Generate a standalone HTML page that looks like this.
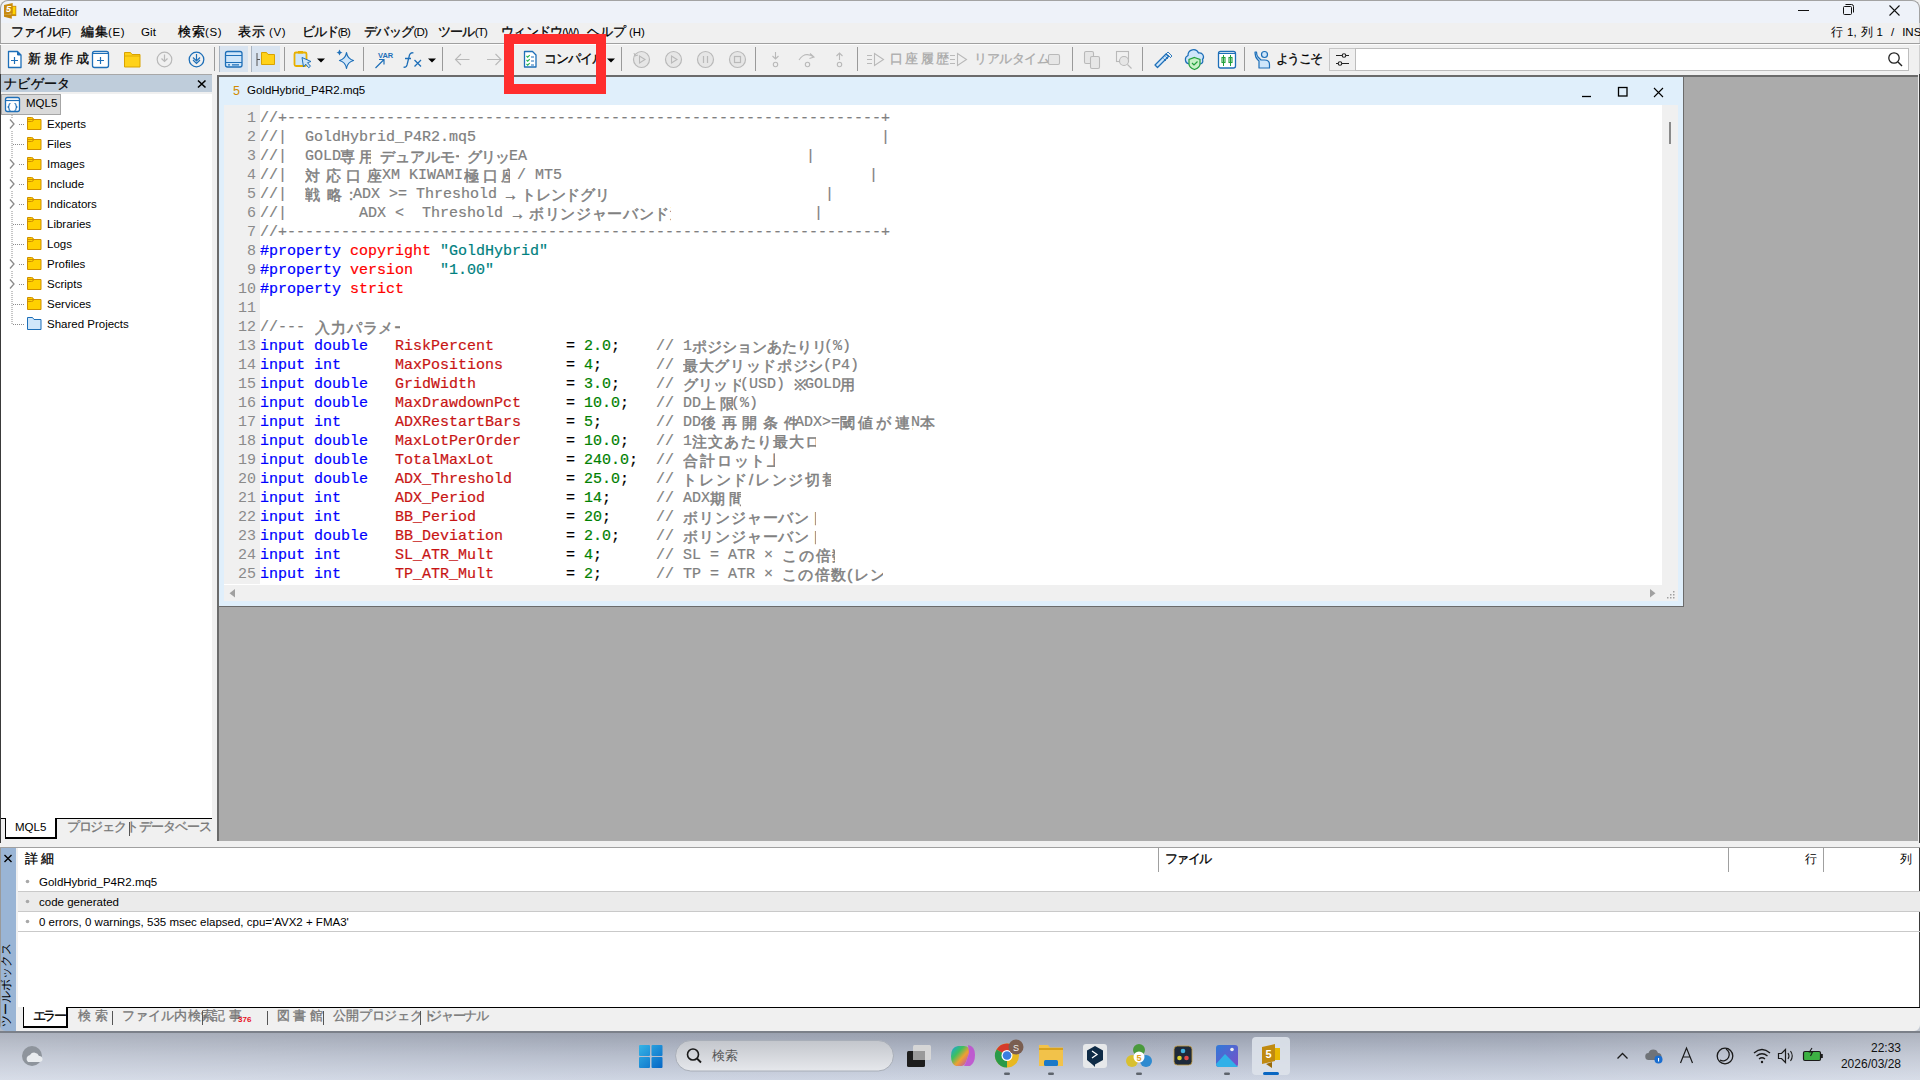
<!DOCTYPE html><html><head><meta charset="utf-8"><title>MetaEditor</title><style>
*{box-sizing:border-box;margin:0;padding:0}
html,body{width:1920px;height:1080px;overflow:hidden;background:#f0f0f0;font-family:"Liberation Sans",sans-serif;font-size:12px;color:#000;position:relative}
.abs{position:absolute}
.t{position:absolute;white-space:nowrap;line-height:1;font-size:11.5px;letter-spacing:0px;margin-top:-1px}
.cd{position:absolute;font-family:"Liberation Mono",monospace;font-size:15px;letter-spacing:0px;-webkit-text-stroke:0.2px currentColor;white-space:pre;line-height:19px;height:19px}
.jp{position:absolute;font-family:"Liberation Sans",sans-serif;font-size:15px;-webkit-text-stroke:0.5px currentColor;white-space:nowrap;overflow:hidden;line-height:19px;height:19px;letter-spacing:-1.5px}
.ln{position:absolute;left:200px;width:56px;text-align:right;font-family:"Liberation Mono",monospace;font-size:15px;letter-spacing:0px;color:#8a8a8a;line-height:19px;height:19px}
.kw{color:#0000ff}.id{color:#c81414}.cm{color:#808080}.nm{color:#008000}.st{color:#008080}.pp{color:#0000ff}.pr{color:#ff0000}.op{color:#000}
.jc{font-size:13px;line-height:0;-webkit-text-stroke:0.3px currentColor}
svg.ov{position:absolute;left:0;top:0;width:1920px;height:1080px;overflow:visible}
</style></head><body>
<div class="abs" style="left:0;top:0;width:1920px;height:40px;background:#eef2f9;border:1px solid #a3a3a3;border-bottom:none;border-radius:8px 8px 0 0"></div>
<div class="abs" style="left:0;top:23px;width:1px;height:51px;background:#a3a3a3"></div>
<div class="abs" style="left:1919px;top:23px;width:1px;height:51px;background:#d0d0d0"></div>
<div class="t" style="left:23px;top:8px">MetaEditor</div>
<div class="abs" style="left:1px;top:23px;width:1918px;height:20px;background:#f0f0f0"></div>
<div class="abs" style="left:0;top:43px;width:1920px;height:1px;background:#a0a0a0"></div>
<div class="abs" style="left:0;top:44px;width:1920px;height:1px;background:#fcfcfc"></div>
<div class="t" id="j0" style="left:11px;top:28px;letter-spacing:-1.11px;"><span class="jc">ファイル</span>(F)</div>
<div class="t" id="j1" style="left:81px;top:28px;letter-spacing:0.54px;"><span class="jc">編集</span>(E)</div>
<div class="t" id="j2" style="left:141px;top:28px;letter-spacing:0.15px;">Git</div>
<div class="t" id="j3" style="left:178px;top:28px;letter-spacing:0.54px;"><span class="jc">検索</span>(S)</div>
<div class="t" id="j4" style="left:238px;top:28px;letter-spacing:0.59px;"><span class="jc">表示</span> (V)</div>
<div class="t" id="j5" style="left:302px;top:28px;letter-spacing:-1.12px;"><span class="jc">ビルド</span>(B)</div>
<div class="t" id="j6" style="left:364px;top:28px;letter-spacing:-0.66px;"><span class="jc">デバッグ</span>(D)</div>
<div class="t" id="j7" style="left:438px;top:28px;letter-spacing:-0.79px;"><span class="jc">ツール</span>(T)</div>
<div class="t" id="j8" style="left:501px;top:28px;letter-spacing:-0.75px;"><span class="jc">ウィンドウ</span>(W)</div>
<div class="t" id="j9" style="left:587px;top:28px;letter-spacing:-0.07px;"><span class="jc">ヘルプ</span> (H)</div>
<div class="t" style="left:1831px;top:28px;word-spacing:0.8px">行 1, 列 1 &nbsp;/ &nbsp;INS</div>
<div class="abs" style="left:1px;top:45px;width:1918px;height:30px;background:#f0f0f0"></div>
<div class="t" id="j10" style="left:28px;top:55px;letter-spacing:3.00px;"><span class="jc">新規作成</span></div>
<div class="t" id="j11" style="left:544px;top:55px;letter-spacing:-0.94px;"><span class="jc">コンパイル</span></div>
<div class="t" id="j12" style="left:890px;top:55px;letter-spacing:2.33px;color:#aaa"><span class="jc">口座履歴</span></div>
<div class="t" id="j13" style="left:974px;top:55px;letter-spacing:-0.50px;color:#aaa"><span class="jc">リアルタイム</span></div>
<div class="t" id="j14" style="left:1276px;top:55px;letter-spacing:-1.67px;"><span class="jc">ようこそ</span></div>
<div class="abs" style="left:0;top:74px;width:212px;height:1px;background:#a8a8a8"></div>
<div class="abs" style="left:0;top:75px;width:212px;height:17px;background:#bfcddb"></div>
<div class="t" id="j15" style="left:4px;top:79px;letter-spacing:0.31px;font-size:12.5px"><span class="jc">ナビゲータ</span></div>
<div class="abs" style="left:1px;top:94px;width:211px;height:724px;background:#fff"></div>
<div class="abs" style="left:1px;top:94px;width:60px;height:21px;background:#d9d9d9;border:1px solid #a6a6a6"></div>
<div class="t" style="left:26px;top:99px">MQL5</div>
<div class="t" style="left:47px;top:120px">Experts</div>
<div class="t" style="left:47px;top:140px">Files</div>
<div class="t" style="left:47px;top:160px">Images</div>
<div class="t" style="left:47px;top:180px">Include</div>
<div class="t" style="left:47px;top:200px">Indicators</div>
<div class="t" style="left:47px;top:220px">Libraries</div>
<div class="t" style="left:47px;top:240px">Logs</div>
<div class="t" style="left:47px;top:260px">Profiles</div>
<div class="t" style="left:47px;top:280px">Scripts</div>
<div class="t" style="left:47px;top:300px">Services</div>
<div class="t" style="left:47px;top:320px">Shared Projects</div>
<div class="abs" style="left:217px;top:75px;width:1701px;height:766px;background:#ababab"></div>
<div class="abs" style="left:217px;top:75px;width:1701px;height:2px;background:#6b6b6b"></div>
<div class="abs" style="left:217px;top:75px;width:2px;height:766px;background:#6b6b6b"></div>
<div class="abs" style="left:219px;top:77px;width:1464px;height:529px;background:#e0effb"></div>
<div class="abs" style="left:219px;top:606px;width:1465px;height:1px;background:#6b6b6b"></div>
<div class="abs" style="left:1683px;top:77px;width:1px;height:530px;background:#6b6b6b"></div>
<div class="abs" style="left:224px;top:105px;width:1438px;height:480px;background:#fff"></div>
<div class="abs" style="left:224px;top:105px;width:36px;height:479px;background:#f0f0f0"></div>
<div class="abs" style="left:1662px;top:105px;width:16px;height:480px;background:#f0f0f0"></div>
<div class="abs" style="left:224px;top:585px;width:1454px;height:16px;background:#f0f0f0"></div>
<div class="t" style="left:233px;top:86px;font-size:12.5px;color:#d08a00">5</div>
<div class="t" style="left:247px;top:86px">GoldHybrid_P4R2.mq5</div>
<div class="ln" style="top:108.5px">1</div>
<span class="cd cm" style="left:260px;top:108.5px">//+------------------------------------------------------------------+</span>
<div class="ln" style="top:127.5px">2</div>
<span class="cd cm" style="left:260px;top:127.5px">//|  GoldHybrid_P4R2.mq5</span>
<span class="cd cm" style="left:881px;top:127.5px">|</span>
<div class="ln" style="top:146.5px">3</div>
<span class="cd cm" style="left:260px;top:146.5px">//|  GOLD</span>
<span class="jp cm" style="left:340px;top:146.5px;width:31px;letter-spacing:3.50px">専用</span>
<span class="jp cm" style="left:380px;top:146.5px;width:79px;letter-spacing:0.00px">デュアルモード</span>
<span class="jp cm" style="left:467px;top:146.5px;width:42px;letter-spacing:-1.00px">グリッド</span>
<span class="cd cm" style="left:509px;top:146.5px">EA</span>
<span class="cd cm" style="left:806px;top:146.5px">|</span>
<div class="ln" style="top:165.5px">4</div>
<span class="cd cm" style="left:260px;top:165.5px">//|  </span>
<span class="jp cm" style="left:305px;top:165.5px;width:79px;letter-spacing:5.60px">対応口座:</span>
<span class="cd cm" style="left:382px;top:165.5px">XM KIWAMI</span>
<span class="jp cm" style="left:464px;top:165.5px;width:46px;letter-spacing:3.67px">極口座</span>
<span class="cd cm" style="left:508px;top:165.5px"> / MT5</span>
<span class="cd cm" style="left:869px;top:165.5px">|</span>
<div class="ln" style="top:184.5px">5</div>
<span class="cd cm" style="left:260px;top:184.5px">//|  </span>
<span class="jp cm" style="left:305px;top:184.5px;width:50px;letter-spacing:7.00px">戦略:</span>
<span class="cd cm" style="left:353px;top:184.5px">ADX &gt;= Threshold</span>
<span class="jp cm" style="left:503px;top:184.5px;width:14px;letter-spacing:1.00px">→</span>
<span class="jp cm" style="left:521px;top:184.5px;width:88px;letter-spacing:-0.25px">トレンドグリッド</span>
<span class="cd cm" style="left:825px;top:184.5px">|</span>
<div class="ln" style="top:203.5px">6</div>
<span class="cd cm" style="left:260px;top:203.5px">//|        ADX &lt;  Threshold</span>
<span class="jp cm" style="left:510px;top:203.5px;width:14px;letter-spacing:1.00px">→</span>
<span class="jp cm" style="left:529px;top:203.5px;width:142px;letter-spacing:0.67px">ボリンジャーバンド逆張り</span>
<span class="cd cm" style="left:814px;top:203.5px">|</span>
<div class="ln" style="top:222.5px">7</div>
<span class="cd cm" style="left:260px;top:222.5px">//+------------------------------------------------------------------+</span>
<div class="ln" style="top:241.5px">8</div>
<span class="cd pp" style="left:260px;top:241.5px">#property</span>
<span class="cd pr" style="left:350px;top:241.5px">copyright</span>
<span class="cd st" style="left:440px;top:241.5px">&quot;GoldHybrid&quot;</span>
<div class="ln" style="top:260.5px">9</div>
<span class="cd pp" style="left:260px;top:260.5px">#property</span>
<span class="cd pr" style="left:350px;top:260.5px">version</span>
<span class="cd st" style="left:440px;top:260.5px">&quot;1.00&quot;</span>
<div class="ln" style="top:279.5px">10</div>
<span class="cd pp" style="left:260px;top:279.5px">#property</span>
<span class="cd pr" style="left:350px;top:279.5px">strict</span>
<div class="ln" style="top:298.5px">11</div>
<div class="ln" style="top:317.5px">12</div>
<span class="cd cm" style="left:260px;top:317.5px">//---</span>
<span class="jp cm" style="left:315px;top:317.5px;width:85px;letter-spacing:0.86px">入力パラメータ</span>
<div class="ln" style="top:336.5px">13</div>
<span class="cd kw" style="left:260px;top:336.5px">input</span>
<span class="cd kw" style="left:314px;top:336.5px">double</span>
<span class="cd id" style="left:395px;top:336.5px">RiskPercent</span>
<span class="cd op" style="left:566px;top:336.5px">=</span>
<span class="cd nm" style="left:584px;top:336.5px">2.0</span>
<span class="cd op" style="left:611px;top:336.5px">;</span>
<span class="cd cm" style="left:656px;top:336.5px">//</span>
<span class="cd cm" style="left:683px;top:336.5px">1</span>
<span class="jp cm" style="left:692px;top:336.5px;width:134px;letter-spacing:0.00px">ポジションあたりリスク率</span>
<span class="cd cm" style="left:824px;top:336.5px">(%)</span>
<div class="ln" style="top:355.5px">14</div>
<span class="cd kw" style="left:260px;top:355.5px">input</span>
<span class="cd kw" style="left:314px;top:355.5px">int</span>
<span class="cd id" style="left:395px;top:355.5px">MaxPositions</span>
<span class="cd op" style="left:566px;top:355.5px">=</span>
<span class="cd nm" style="left:584px;top:355.5px">4</span>
<span class="cd op" style="left:593px;top:355.5px">;</span>
<span class="cd cm" style="left:656px;top:355.5px">//</span>
<span class="jp cm" style="left:683px;top:355.5px;width:142px;letter-spacing:0.67px">最大グリッドポジション数</span>
<span class="cd cm" style="left:823px;top:355.5px">(P4)</span>
<div class="ln" style="top:374.5px">15</div>
<span class="cd kw" style="left:260px;top:374.5px">input</span>
<span class="cd kw" style="left:314px;top:374.5px">double</span>
<span class="cd id" style="left:395px;top:374.5px">GridWidth</span>
<span class="cd op" style="left:566px;top:374.5px">=</span>
<span class="cd nm" style="left:584px;top:374.5px">3.0</span>
<span class="cd op" style="left:611px;top:374.5px">;</span>
<span class="cd cm" style="left:656px;top:374.5px">//</span>
<span class="jp cm" style="left:683px;top:374.5px;width:58px;letter-spacing:0.20px">グリッド幅</span>
<span class="cd cm" style="left:740px;top:374.5px">(USD)</span>
<span class="jp cm" style="left:794px;top:374.5px;width:13px;letter-spacing:0.00px">※</span>
<span class="cd cm" style="left:805px;top:374.5px">GOLD</span>
<span class="jp cm" style="left:840px;top:374.5px;width:17px;letter-spacing:4.00px">用</span>
<div class="ln" style="top:393.5px">16</div>
<span class="cd kw" style="left:260px;top:393.5px">input</span>
<span class="cd kw" style="left:314px;top:393.5px">double</span>
<span class="cd id" style="left:395px;top:393.5px">MaxDrawdownPct</span>
<span class="cd op" style="left:566px;top:393.5px">=</span>
<span class="cd nm" style="left:584px;top:393.5px">10.0</span>
<span class="cd op" style="left:620px;top:393.5px">;</span>
<span class="cd cm" style="left:656px;top:393.5px">//</span>
<span class="cd cm" style="left:683px;top:393.5px">DD</span>
<span class="jp cm" style="left:701px;top:393.5px;width:32px;letter-spacing:4.00px">上限</span>
<span class="cd cm" style="left:731px;top:393.5px">(%)</span>
<div class="ln" style="top:412.5px">17</div>
<span class="cd kw" style="left:260px;top:412.5px">input</span>
<span class="cd kw" style="left:314px;top:412.5px">int</span>
<span class="cd id" style="left:395px;top:412.5px">ADXRestartBars</span>
<span class="cd op" style="left:566px;top:412.5px">=</span>
<span class="cd nm" style="left:584px;top:412.5px">5</span>
<span class="cd op" style="left:593px;top:412.5px">;</span>
<span class="cd cm" style="left:656px;top:412.5px">//</span>
<span class="cd cm" style="left:683px;top:412.5px">DD</span>
<span class="jp cm" style="left:701px;top:412.5px;width:96px;letter-spacing:5.67px">後再開条件:</span>
<span class="cd cm" style="left:795px;top:412.5px">ADX&gt;=</span>
<span class="jp cm" style="left:840px;top:412.5px;width:73px;letter-spacing:3.20px">閾値が連続</span>
<span class="cd cm" style="left:911px;top:412.5px">N</span>
<span class="jp cm" style="left:920px;top:412.5px;width:17px;letter-spacing:4.00px">本</span>
<div class="ln" style="top:431.5px">18</div>
<span class="cd kw" style="left:260px;top:431.5px">input</span>
<span class="cd kw" style="left:314px;top:431.5px">double</span>
<span class="cd id" style="left:395px;top:431.5px">MaxLotPerOrder</span>
<span class="cd op" style="left:566px;top:431.5px">=</span>
<span class="cd nm" style="left:584px;top:431.5px">10.0</span>
<span class="cd op" style="left:620px;top:431.5px">;</span>
<span class="cd cm" style="left:656px;top:431.5px">//</span>
<span class="cd cm" style="left:683px;top:431.5px">1</span>
<span class="jp cm" style="left:692px;top:431.5px;width:124px;letter-spacing:1.20px">注文あたり最大ロット</span>
<div class="ln" style="top:450.5px">19</div>
<span class="cd kw" style="left:260px;top:450.5px">input</span>
<span class="cd kw" style="left:314px;top:450.5px">double</span>
<span class="cd id" style="left:395px;top:450.5px">TotalMaxLot</span>
<span class="cd op" style="left:566px;top:450.5px">=</span>
<span class="cd nm" style="left:584px;top:450.5px">240.0</span>
<span class="cd op" style="left:629px;top:450.5px">;</span>
<span class="cd cm" style="left:656px;top:450.5px">//</span>
<span class="jp cm" style="left:683px;top:450.5px;width:92px;letter-spacing:1.86px">合計ロット上限</span>
<div class="ln" style="top:469.5px">20</div>
<span class="cd kw" style="left:260px;top:469.5px">input</span>
<span class="cd kw" style="left:314px;top:469.5px">double</span>
<span class="cd id" style="left:395px;top:469.5px">ADX_Threshold</span>
<span class="cd op" style="left:566px;top:469.5px">=</span>
<span class="cd nm" style="left:584px;top:469.5px">25.0</span>
<span class="cd op" style="left:620px;top:469.5px">;</span>
<span class="cd cm" style="left:656px;top:469.5px">//</span>
<span class="jp cm" style="left:682px;top:469.5px;width:149px;letter-spacing:1.75px">トレンド/レンジ切替閾値</span>
<div class="ln" style="top:488.5px">21</div>
<span class="cd kw" style="left:260px;top:488.5px">input</span>
<span class="cd kw" style="left:314px;top:488.5px">int</span>
<span class="cd id" style="left:395px;top:488.5px">ADX_Period</span>
<span class="cd op" style="left:566px;top:488.5px">=</span>
<span class="cd nm" style="left:584px;top:488.5px">14</span>
<span class="cd op" style="left:602px;top:488.5px">;</span>
<span class="cd cm" style="left:656px;top:488.5px">//</span>
<span class="cd cm" style="left:683px;top:488.5px">ADX</span>
<span class="jp cm" style="left:710px;top:488.5px;width:31px;letter-spacing:3.50px">期間</span>
<div class="ln" style="top:507.5px">22</div>
<span class="cd kw" style="left:260px;top:507.5px">input</span>
<span class="cd kw" style="left:314px;top:507.5px">int</span>
<span class="cd id" style="left:395px;top:507.5px">BB_Period</span>
<span class="cd op" style="left:566px;top:507.5px">=</span>
<span class="cd nm" style="left:584px;top:507.5px">20</span>
<span class="cd op" style="left:602px;top:507.5px">;</span>
<span class="cd cm" style="left:656px;top:507.5px">//</span>
<span class="jp cm" style="left:683px;top:507.5px;width:133px;letter-spacing:0.91px">ボリンジャーバンド期間</span>
<div class="ln" style="top:526.5px">23</div>
<span class="cd kw" style="left:260px;top:526.5px">input</span>
<span class="cd kw" style="left:314px;top:526.5px">double</span>
<span class="cd id" style="left:395px;top:526.5px">BB_Deviation</span>
<span class="cd op" style="left:566px;top:526.5px">=</span>
<span class="cd nm" style="left:584px;top:526.5px">2.0</span>
<span class="cd op" style="left:611px;top:526.5px">;</span>
<span class="cd cm" style="left:656px;top:526.5px">//</span>
<span class="jp cm" style="left:683px;top:526.5px;width:133px;letter-spacing:0.91px">ボリンジャーバンド偏差</span>
<div class="ln" style="top:545.5px">24</div>
<span class="cd kw" style="left:260px;top:545.5px">input</span>
<span class="cd kw" style="left:314px;top:545.5px">int</span>
<span class="cd id" style="left:395px;top:545.5px">SL_ATR_Mult</span>
<span class="cd op" style="left:566px;top:545.5px">=</span>
<span class="cd nm" style="left:584px;top:545.5px">4</span>
<span class="cd op" style="left:593px;top:545.5px">;</span>
<span class="cd cm" style="left:656px;top:545.5px">//</span>
<span class="cd cm" style="left:683px;top:545.5px">SL = ATR ×</span>
<span class="jp cm" style="left:782px;top:545.5px;width:53px;letter-spacing:1.75px">この倍数</span>
<div class="ln" style="top:564.5px">25</div>
<span class="cd kw" style="left:260px;top:564.5px">input</span>
<span class="cd kw" style="left:314px;top:564.5px">int</span>
<span class="cd id" style="left:395px;top:564.5px">TP_ATR_Mult</span>
<span class="cd op" style="left:566px;top:564.5px">=</span>
<span class="cd nm" style="left:584px;top:564.5px">2</span>
<span class="cd op" style="left:593px;top:564.5px">;</span>
<span class="cd cm" style="left:656px;top:564.5px">//</span>
<span class="cd cm" style="left:683px;top:564.5px">TP = ATR ×</span>
<span class="jp cm" style="left:782px;top:564.5px;width:101px;letter-spacing:1.33px">この倍数(レンジ)</span>
<div class="abs" style="left:0;top:74px;width:1px;height:773px;background:#3a3a3a"></div>
<div class="abs" style="left:0;top:847px;width:1px;height:184px;background:#9a9a9a"></div>
<div class="abs" style="left:1919px;top:74px;width:1px;height:957px;background:#3a3a3a"></div>
<div class="abs" style="left:0;top:843px;width:1920px;height:4px;background:#f0f0f0"></div>
<div class="abs" style="left:0;top:847px;width:1920px;height:1px;background:#a0a0a0"></div>
<div class="abs" style="left:1px;top:848px;width:15px;height:183px;background:#9ab5d5"></div>
<div class="abs" style="left:18px;top:848px;width:1901px;height:159px;background:#fff"></div>
<div class="abs" style="left:18px;top:891px;width:1902px;height:1px;background:#c9c9c9"></div>
<div class="abs" style="left:18px;top:892px;width:1902px;height:19px;background:#ebebeb"></div>
<div class="abs" style="left:18px;top:911px;width:1902px;height:1px;background:#c9c9c9"></div>
<div class="abs" style="left:18px;top:931px;width:1902px;height:1px;background:#c9c9c9"></div>
<div class="abs" style="left:1158px;top:848px;width:1px;height:24px;background:#a0a0a0"></div>
<div class="abs" style="left:1728px;top:848px;width:1px;height:24px;background:#a0a0a0"></div>
<div class="abs" style="left:1823px;top:848px;width:1px;height:24px;background:#a0a0a0"></div>
<div class="t" id="j16" style="left:25px;top:855px;letter-spacing:2.50px;"><span class="jc">詳細</span></div>
<div class="t" id="j17" style="left:1165px;top:855px;letter-spacing:-1.67px;"><span class="jc">ファイル</span></div>
<div class="t" style="left:1805px;top:855px">行</div>
<div class="t" style="left:1900px;top:855px">列</div>
<div class="t" style="left:39px;top:878px">GoldHybrid_P4R2.mq5</div>
<div class="t" style="left:39px;top:898px">code generated</div>
<div class="t" style="left:39px;top:918px">0 errors, 0 warnings, 535 msec elapsed, cpu='AVX2 + FMA3'</div>
<div class="t" style="left:1px;top:1028px;transform-origin:0 0;transform:rotate(-90deg);font-size:11.5px;width:70px">ツールボックス</div>
<div class="abs" style="left:18px;top:1007px;width:1902px;height:24px;background:#f0f0f0"></div>
<div class="abs" style="left:67px;top:1007px;width:1853px;height:1px;background:#000"></div>
<div class="abs" style="left:23px;top:1007px;width:45px;height:21px;background:#fff;border:1px solid #000;border-top:none;border-right-width:2px;border-bottom-width:2px"></div>
<div class="t" id="j18" style="left:33px;top:1012px;letter-spacing:-2.62px;"><span class="jc">エラー</span></div>
<div class="t" id="j19" style="left:78px;top:1012px;letter-spacing:3.50px;color:#777"><span class="jc">検索</span></div>
<div class="t" id="j20" style="left:122px;top:1012px;letter-spacing:0.12px;color:#777"><span class="jc">ファイル内検索</span></div>
<div class="t" id="j21" style="left:212px;top:1012px;letter-spacing:3.50px;color:#777"><span class="jc">記事</span></div>
<div class="t" id="j22" style="left:277px;top:1012px;letter-spacing:3.38px;color:#777"><span class="jc">図書館</span></div>
<div class="t" id="j23" style="left:333px;top:1012px;letter-spacing:-0.14px;color:#777"><span class="jc">公開プロジェクト</span></div>
<div class="t" id="j24" style="left:429px;top:1012px;letter-spacing:-1.19px;color:#777"><span class="jc">ジャーナル</span></div>
<div class="abs" style="left:112px;top:1011px;width:1px;height:14px;background:#555"></div>
<div class="abs" style="left:202px;top:1011px;width:1px;height:14px;background:#555"></div>
<div class="abs" style="left:267px;top:1011px;width:1px;height:14px;background:#555"></div>
<div class="abs" style="left:323px;top:1011px;width:1px;height:14px;background:#555"></div>
<div class="abs" style="left:420px;top:1011px;width:1px;height:14px;background:#555"></div>
<div class="t" style="left:238px;top:1017px;font-size:8px;font-weight:bold;letter-spacing:0;color:#e81123">376</div>
<div class="abs" style="left:56px;top:818px;width:156px;height:1px;background:#000"></div>
<div class="abs" style="left:1px;top:818px;width:5px;height:1px;background:#000"></div>
<div class="abs" style="left:5px;top:818px;width:52px;height:21px;background:#fff;border:1px solid #000;border-top:none;border-right-width:2px;border-bottom-width:2px"></div>
<div class="t" style="left:15px;top:823px">MQL5</div>
<div class="t" id="j25" style="left:67px;top:823px;letter-spacing:-1.30px;color:#777"><span class="jc">プロジェクト</span></div>
<div class="abs" style="left:129px;top:822px;width:1px;height:14px;background:#555"></div>
<div class="t" id="j26" style="left:139px;top:823px;letter-spacing:-1.10px;color:#777"><span class="jc">データベース</span></div>
<svg class="ov" viewBox="0 0 1920 1080">
<rect x="5.5" y="97.5" width="14" height="14" rx="2" fill="#fff" stroke="#1e6fb8" stroke-width="1.3"/>
<line x1="5.5" y1="100.5" x2="19.5" y2="100.5" stroke="#1e6fb8" stroke-width="1.2"/>
<path d="M10.5 103.5 q-1.5 0 -1.5 1.5 v1 l-1 1 l1 1 v1 q0 1.5 1.5 1.5 M14.5 103.5 q1.5 0 1.5 1.5 v1 l1 1 l-1 1 v1 q0 1.5 -1.5 1.5" fill="none" stroke="#1e6fb8" stroke-width="1.1"/>
<line x1="12" y1="115" x2="12" y2="324" stroke="#8c8c8c" stroke-width="1" stroke-dasharray="1,1"/>
<rect x="8" y="118" width="8" height="12" fill="#fff"/>
<polyline points="10,119.5 14,124 10,128.5" fill="none" stroke="#8a8a8a" stroke-width="1.3"/>
<line x1="19" y1="124.5" x2="24" y2="124.5" stroke="#8c8c8c" stroke-width="1" stroke-dasharray="1,1"/>
<path d="M27.5 117.5 h4 a2 2 0 0 1 0 4 h-4 z M27.5 119.5 h13.5 v10 h-13.5 z" fill="#ffd000" stroke="#d09000" stroke-width="1"/>
<line x1="13" y1="144.5" x2="24" y2="144.5" stroke="#8c8c8c" stroke-width="1" stroke-dasharray="1,1"/>
<path d="M27.5 137.5 h4 a2 2 0 0 1 0 4 h-4 z M27.5 139.5 h13.5 v10 h-13.5 z" fill="#ffd000" stroke="#d09000" stroke-width="1"/>
<rect x="8" y="158" width="8" height="12" fill="#fff"/>
<polyline points="10,159.5 14,164 10,168.5" fill="none" stroke="#8a8a8a" stroke-width="1.3"/>
<line x1="19" y1="164.5" x2="24" y2="164.5" stroke="#8c8c8c" stroke-width="1" stroke-dasharray="1,1"/>
<path d="M27.5 157.5 h4 a2 2 0 0 1 0 4 h-4 z M27.5 159.5 h13.5 v10 h-13.5 z" fill="#ffd000" stroke="#d09000" stroke-width="1"/>
<rect x="8" y="178" width="8" height="12" fill="#fff"/>
<polyline points="10,179.5 14,184 10,188.5" fill="none" stroke="#8a8a8a" stroke-width="1.3"/>
<line x1="19" y1="184.5" x2="24" y2="184.5" stroke="#8c8c8c" stroke-width="1" stroke-dasharray="1,1"/>
<path d="M27.5 177.5 h4 a2 2 0 0 1 0 4 h-4 z M27.5 179.5 h13.5 v10 h-13.5 z" fill="#ffd000" stroke="#d09000" stroke-width="1"/>
<rect x="8" y="198" width="8" height="12" fill="#fff"/>
<polyline points="10,199.5 14,204 10,208.5" fill="none" stroke="#8a8a8a" stroke-width="1.3"/>
<line x1="19" y1="204.5" x2="24" y2="204.5" stroke="#8c8c8c" stroke-width="1" stroke-dasharray="1,1"/>
<path d="M27.5 197.5 h4 a2 2 0 0 1 0 4 h-4 z M27.5 199.5 h13.5 v10 h-13.5 z" fill="#ffd000" stroke="#d09000" stroke-width="1"/>
<line x1="13" y1="224.5" x2="24" y2="224.5" stroke="#8c8c8c" stroke-width="1" stroke-dasharray="1,1"/>
<path d="M27.5 217.5 h4 a2 2 0 0 1 0 4 h-4 z M27.5 219.5 h13.5 v10 h-13.5 z" fill="#ffd000" stroke="#d09000" stroke-width="1"/>
<line x1="13" y1="244.5" x2="24" y2="244.5" stroke="#8c8c8c" stroke-width="1" stroke-dasharray="1,1"/>
<path d="M27.5 237.5 h4 a2 2 0 0 1 0 4 h-4 z M27.5 239.5 h13.5 v10 h-13.5 z" fill="#ffd000" stroke="#d09000" stroke-width="1"/>
<rect x="8" y="258" width="8" height="12" fill="#fff"/>
<polyline points="10,259.5 14,264 10,268.5" fill="none" stroke="#8a8a8a" stroke-width="1.3"/>
<line x1="19" y1="264.5" x2="24" y2="264.5" stroke="#8c8c8c" stroke-width="1" stroke-dasharray="1,1"/>
<path d="M27.5 257.5 h4 a2 2 0 0 1 0 4 h-4 z M27.5 259.5 h13.5 v10 h-13.5 z" fill="#ffd000" stroke="#d09000" stroke-width="1"/>
<rect x="8" y="278" width="8" height="12" fill="#fff"/>
<polyline points="10,279.5 14,284 10,288.5" fill="none" stroke="#8a8a8a" stroke-width="1.3"/>
<line x1="19" y1="284.5" x2="24" y2="284.5" stroke="#8c8c8c" stroke-width="1" stroke-dasharray="1,1"/>
<path d="M27.5 277.5 h4 a2 2 0 0 1 0 4 h-4 z M27.5 279.5 h13.5 v10 h-13.5 z" fill="#ffd000" stroke="#d09000" stroke-width="1"/>
<line x1="13" y1="304.5" x2="24" y2="304.5" stroke="#8c8c8c" stroke-width="1" stroke-dasharray="1,1"/>
<path d="M27.5 297.5 h4 a2 2 0 0 1 0 4 h-4 z M27.5 299.5 h13.5 v10 h-13.5 z" fill="#ffd000" stroke="#d09000" stroke-width="1"/>
<line x1="13" y1="324.5" x2="24" y2="324.5" stroke="#8c8c8c" stroke-width="1" stroke-dasharray="1,1"/>
<path d="M27.5 317.5 h5 l1.5 2 h7 v10 h-13.5 z" fill="#cfe6fa" stroke="#1e6fb8" stroke-width="1"/>
<line x1="214.5" y1="47" x2="214.5" y2="71" stroke="#9a9a9a" stroke-width="1"/>
<line x1="284.5" y1="47" x2="284.5" y2="71" stroke="#9a9a9a" stroke-width="1"/>
<line x1="363.5" y1="47" x2="363.5" y2="71" stroke="#9a9a9a" stroke-width="1"/>
<line x1="442.5" y1="47" x2="442.5" y2="71" stroke="#9a9a9a" stroke-width="1"/>
<line x1="621.5" y1="47" x2="621.5" y2="71" stroke="#9a9a9a" stroke-width="1"/>
<line x1="755.5" y1="47" x2="755.5" y2="71" stroke="#9a9a9a" stroke-width="1"/>
<line x1="857.5" y1="47" x2="857.5" y2="71" stroke="#9a9a9a" stroke-width="1"/>
<line x1="1072.5" y1="47" x2="1072.5" y2="71" stroke="#9a9a9a" stroke-width="1"/>
<line x1="1142.5" y1="47" x2="1142.5" y2="71" stroke="#9a9a9a" stroke-width="1"/>
<line x1="1244.5" y1="47" x2="1244.5" y2="71" stroke="#9a9a9a" stroke-width="1"/>
<rect x="219" y="46" width="29" height="26" fill="#d9e4f0"/><line x1="219.5" y1="46" x2="219.5" y2="72" stroke="#a9b4c0"/>
<rect x="251" y="46" width="29" height="26" fill="#d9e4f0"/><line x1="251.5" y1="46" x2="251.5" y2="72" stroke="#a9b4c0"/>
<path d="M8.5 51.5 h9 l3.5 3.5 v12.5 h-12.5 z" fill="#fff" stroke="#1e6fb8" stroke-width="1.3" stroke-linejoin="round"/>
<path d="M17.5 51.5 v3.5 h3.5" fill="#1e6fb8" stroke="#1e6fb8" stroke-width="1"/>
<path d="M11 60.5 h7 M14.5 57 v7" stroke="#1e6fb8" stroke-width="1.2"/>
<rect x="92.5" y="51.5" width="16" height="16" rx="2" fill="#fff" stroke="#1e6fb8" stroke-width="1.3"/>
<line x1="92.5" y1="53.5" x2="108.5" y2="53.5" stroke="#1e6fb8" stroke-width="1"/>
<path d="M97 60.5 h7 M100.5 57 v7" stroke="#1e6fb8" stroke-width="1.2"/>
<path d="M124.5 52.5 h6 l1.5 2 h8 v12.5 h-15.5 z" fill="#ffd21a" stroke="#d9a300" stroke-width="1"/>
<line x1="124.5" y1="56" x2="140" y2="56" stroke="#d9a300" stroke-width="0.8"/>
<circle cx="164.5" cy="59.5" r="7.3" fill="none" stroke="#b9b9b9" stroke-width="1.2"/><path d="M164.5 54.5 v7 M161.5 58.5 l3 3 l3 -3" fill="none" stroke="#b9b9b9" stroke-width="1.2"/>
<circle cx="196.5" cy="59.5" r="7.3" fill="none" stroke="#1e6fb8" stroke-width="1.3"/><path d="M196.5 54 v6 M193 57.5 l3.5 3.5 l3.5 -3.5 M193 60 l3.5 3.5 l3.5 -3.5" fill="none" stroke="#1e6fb8" stroke-width="1.2"/>
<rect x="225.5" y="51.5" width="16.5" height="15.5" rx="2" fill="#cfe6fa" stroke="#1e6fb8" stroke-width="1.3"/>
<line x1="225.5" y1="55.5" x2="242" y2="55.5" stroke="#1e6fb8" stroke-width="1"/><line x1="225.5" y1="62.5" x2="242" y2="62.5" stroke="#1e6fb8" stroke-width="1"/>
<path d="M228 64.8 h2 M232 64.8 h7" stroke="#1e6fb8" stroke-width="1.3"/>
<path d="M257 53 v13 M257 59.5 h3" stroke="#555" stroke-width="1"/>
<path d="M261.5 52.5 h5 l1.5 2 h6.5 v10 h-13 z" fill="#ffd21a" stroke="#d9a300" stroke-width="1"/>
<rect x="294.5" y="52.5" width="12" height="13.5" rx="1.5" fill="#cfe6fa" stroke="#e8b000" stroke-width="1.8"/>
<rect x="298" y="51" width="5" height="2.5" fill="#e8b000"/>
<path d="M302 57.5 l9 4 l-3.5 1.2 l3 3.5 l-1.8 1.5 l-3 -3.5 l-2.2 2.8 z" fill="#cfe6fa" stroke="#1e6fb8" stroke-width="1" stroke-linejoin="round"/>
<path d="M317 58.5 h8 l-4 4 z" fill="#000"/>
<path d="M428 58.5 h8 l-4 4 z" fill="#000"/>
<path d="M607 58.5 h8 l-4 4 z" fill="#000"/>
<path d="M346.5 52.5 Q347.5 59 353.5 60.5 Q347.5 62 346.5 68.5 Q345.5 62 339.5 60.5 Q345.5 59 346.5 52.5 z" fill="#cfe6fa" stroke="#1e6fb8" stroke-width="1.2" stroke-linejoin="round"/>
<path d="M339.5 49.5 Q340 52 342.5 52.5 Q340 53 339.5 55.5 Q339 53 336.5 52.5 Q339 52 339.5 49.5 z" fill="#1e6fb8"/>
<text x="378" y="57.5" font-family="Liberation Sans" font-weight="bold" font-size="7.5" fill="#1e6fb8">VAR</text>
<path d="M375.5 68 l8.5 -8.5 M379 59.5 h5 v5" fill="none" stroke="#1e6fb8" stroke-width="1.2"/>
<path d="M413.5 53 q-3 -1 -4 2 l-2.5 10 q-1 3 -3.5 2 M405 58.5 h6" fill="none" stroke="#1e6fb8" stroke-width="1.3"/>
<path d="M414.5 60 l6.5 6.5 M421 60 l-6.5 6.5" stroke="#1e6fb8" stroke-width="1.3"/>
<path d="M455.5 59.5 h14 M461 54 l-5.5 5.5 l5.5 5.5" fill="none" stroke="#b9b9b9" stroke-width="1.1"/>
<path d="M487 59.5 h14 M495.5 54 l5.5 5.5 l-5.5 5.5" fill="none" stroke="#b9b9b9" stroke-width="1.1"/>
<path d="M524.5 51.5 h8 l3.5 3.5 v12 h-11.5 z" fill="#fff" stroke="#1e6fb8" stroke-width="1.3" stroke-linejoin="round"/>
<path d="M526.5 56 l1.2 1.2 l2 -2 M526.5 60 l1.2 1.2 l2 -2 M526.5 64 l1.2 1.2 l2 -2" fill="none" stroke="#22b14c" stroke-width="1.1"/>
<path d="M531 57 h3 M531 61 h3 M531 65 h3" stroke="#1e6fb8" stroke-width="1"/>
<circle cx="641.5" cy="59.5" r="8" fill="#e6e6e6" stroke="#b9b9b9" stroke-width="1.2"/>
<circle cx="673.5" cy="59.5" r="8" fill="#e6e6e6" stroke="#b9b9b9" stroke-width="1.2"/>
<circle cx="705.5" cy="59.5" r="8" fill="#e6e6e6" stroke="#b9b9b9" stroke-width="1.2"/>
<circle cx="737.5" cy="59.5" r="8" fill="#e6e6e6" stroke="#b9b9b9" stroke-width="1.2"/>
<path d="M639.5 56 v7 l5.5 -3.5 z" fill="none" stroke="#b9b9b9" stroke-width="1.1"/><path d="M634 53 l1 3 l3 -1" fill="none" stroke="#b9b9b9" stroke-width="1"/>
<path d="M671.5 56 v7 l5.5 -3.5 z" fill="none" stroke="#b9b9b9" stroke-width="1.1"/>
<path d="M703.5 56 v7 M707.5 56 v7" stroke="#b9b9b9" stroke-width="1.2"/>
<rect x="734.5" y="56.5" width="6" height="6" fill="none" stroke="#b9b9b9" stroke-width="1.2"/>
<path d="M775.5 52 v7 M772.5 56 l3 3 l3 -3" fill="none" stroke="#b9b9b9" stroke-width="1.1"/><circle cx="775.5" cy="64.5" r="2.2" fill="none" stroke="#b9b9b9" stroke-width="1.1"/>
<path d="M799 60 q6 -9 15 -3 M810 53.5 l4 3.5 l-4.5 1.5" fill="none" stroke="#b9b9b9" stroke-width="1.1"/><circle cx="807.5" cy="64.5" r="2.2" fill="none" stroke="#b9b9b9" stroke-width="1.1"/>
<path d="M839.5 53 v7 M836.5 56 l3 -3 l3 3" fill="none" stroke="#b9b9b9" stroke-width="1.1"/><circle cx="839.5" cy="64.5" r="2.2" fill="none" stroke="#b9b9b9" stroke-width="1.1"/>
<path d="M867 55.5 h5 M867 59.5 h5 M867 63.5 h5 M874.5 53.5 v12 l9 -6 z" fill="none" stroke="#b9b9b9" stroke-width="1.1"/>
<path d="M950 55.5 h5 M950 59.5 h5 M950 63.5 h5 M957.5 53.5 v12 l9 -6 z" fill="none" stroke="#b9b9b9" stroke-width="1.1"/>
<rect x="1048.5" y="54.5" width="11" height="10" rx="1.5" fill="#e6e6e6" stroke="#b9b9b9" stroke-width="1.1"/>
<rect x="1084.5" y="51.5" width="9" height="12" rx="1.5" fill="#e6e6e6" stroke="#b9b9b9" stroke-width="1.1"/><rect x="1090.5" y="56.5" width="9" height="12" rx="1.5" fill="#e6e6e6" stroke="#b9b9b9" stroke-width="1.1"/>
<rect x="1116.5" y="51.5" width="12" height="10" fill="none" stroke="#b9b9b9" stroke-width="1.1"/><circle cx="1124" cy="61" r="4.5" fill="#e6e6e6" stroke="#b9b9b9" stroke-width="1.1"/><path d="M1127.5 64.5 l4 4" stroke="#b9b9b9" stroke-width="1.1"/>
<path d="M1155 65 l11 -11 l2.5 2.5 l-11 11 z" fill="#cfe6fa" stroke="#1e6fb8" stroke-width="1.3" stroke-linejoin="round"/><path d="M1166 54 l2 -2 l4 4 l-2 2 M1163.5 58.5 l2.5 2.5 M1165.5 56.5 l2.5 2.5 M1167.5 54.5 l2.5 2.5" fill="none" stroke="#1e6fb8" stroke-width="0.9"/>
<path d="M1189 64 a4.5 4.5 0 0 1 -1 -8.5 a5.5 5.5 0 0 1 10.5 -2.5 a4 4 0 0 1 4 6.5 a3.5 3.5 0 0 1 -2 4.5 z" fill="#cfe6fa" stroke="#1e6fb8" stroke-width="1.2"/>
<path d="M1194.5 57.5 l5.5 2 v4.5 q0 3.5 -5.5 5.5 q-5.5 -2 -5.5 -5.5 v-4.5 z" fill="#c8f0c8" stroke="#22a03c" stroke-width="1.2"/><path d="M1192 63 l2 2 l3.5 -3.5" fill="none" stroke="#22a03c" stroke-width="1.2"/>
<rect x="1218.5" y="51.5" width="17" height="16.5" rx="2" fill="#fff" stroke="#1e6fb8" stroke-width="1.3"/><line x1="1218.5" y1="53.5" x2="1235.5" y2="53.5" stroke="#1e6fb8"/>
<path d="M1223.5 55 v11 M1230.5 55 v11" stroke="#22a03c" stroke-width="1"/><rect x="1222" y="57.5" width="3" height="5" fill="none" stroke="#22a03c" stroke-width="1.1"/><rect x="1229" y="57.5" width="3" height="5" fill="none" stroke="#22a03c" stroke-width="1.1"/>
<circle cx="1264.5" cy="54.5" r="3" fill="#cfe6fa" stroke="#1e6fb8" stroke-width="1.2"/>
<path d="M1255 52 q0 5 2.5 7.5 l1.5 1.5 v7 h10.5 v-3.5 q0 -4.5 -5 -4.5 h-3.5 l-3 -3 q-1.5 -2 -1.5 -5 z" fill="#cfe6fa" stroke="#1e6fb8" stroke-width="1.2" stroke-linejoin="round"/>
<rect x="1329.5" y="48.5" width="26" height="22" fill="#f0f0f0" stroke="#c6c6c6"/>
<path d="M1336 55.5 h13 M1336 63.5 h13" stroke="#222" stroke-width="1.1"/><circle cx="1344" cy="55.5" r="1.8" fill="#f0f0f0" stroke="#222" stroke-width="1.1"/><circle cx="1340" cy="63.5" r="1.8" fill="#f0f0f0" stroke="#222" stroke-width="1.1"/>
<rect x="1355.5" y="48.5" width="553" height="22" fill="#fff" stroke="#bdbdbd"/>
<circle cx="1894" cy="58" r="5.2" fill="none" stroke="#222" stroke-width="1.3"/><path d="M1898 62 l4 4" stroke="#222" stroke-width="1.4"/>
<rect x="509" y="39" width="92" height="50" fill="none" stroke="#ff2d2d" stroke-width="10"/>
<rect x="11.8" y="6.3" width="4" height="9.3" fill="#ffd500" stroke="#cc8a06" stroke-width="0.9"/>
<path d="M4 14.3 L15.8 14.3 L15.8 15.8 L11.8 15.8 L11.8 18.8 L4 16.8 z" fill="#c4870c"/>
<path d="M4 5 L12.7 3 L12.7 13.6 L4 14.6 z" fill="#c98b0f"/>
<text x="8.4" y="12.2" font-family="Liberation Sans" font-weight="bold" font-style="italic" font-size="9" text-anchor="middle" fill="#fff">5</text>
<path d="M1798 10.5 h11" stroke="#111" stroke-width="1"/>
<rect x="1843.5" y="6.5" width="8" height="8" rx="1" fill="none" stroke="#111" stroke-width="1"/><path d="M1845.5 4.5 h6 a2 2 0 0 1 2 2 v6" fill="none" stroke="#111" stroke-width="1"/>
<path d="M1889.5 5.5 l10 10 M1899.5 5.5 l-10 10" stroke="#111" stroke-width="1.1"/>
<path d="M198 80.5 l7.5 7 M205.5 80.5 l-7.5 7" stroke="#000" stroke-width="1.6"/>
<path d="M1582 96.5 h9" stroke="#000" stroke-width="1.3"/>
<rect x="1618.5" y="87.5" width="8.5" height="8.5" fill="none" stroke="#000" stroke-width="1.3"/>
<path d="M1654 88 l9 9 M1663 88 l-9 9" stroke="#000" stroke-width="1.1"/>
<rect x="1669" y="122" width="2" height="22" fill="#8a8a8a"/>
<path d="M235 589 v8.5 l-5.5 -4.25 z" fill="#a0a0a0"/><path d="M1650 589 v8.5 l5.5 -4.25 z" fill="#a0a0a0"/>
<g fill="#a0a0a0"><rect x="1673" y="591" width="1.5" height="1.5"/><rect x="1670" y="594" width="1.5" height="1.5"/><rect x="1673" y="594" width="1.5" height="1.5"/><rect x="1667" y="597" width="1.5" height="1.5"/><rect x="1670" y="597" width="1.5" height="1.5"/><rect x="1673" y="597" width="1.5" height="1.5"/></g>
<path d="M4.5 855 l7 7 M11.5 855 l-7 7" stroke="#000" stroke-width="1.4"/>
<circle cx="27.5" cy="881.5" r="1.8" fill="#a8a8a8"/>
<circle cx="27.5" cy="901.5" r="1.8" fill="#a8a8a8"/>
<circle cx="27.5" cy="921.5" r="1.8" fill="#a8a8a8"/>
<defs><linearGradient id="tbg" x1="0" y1="0" x2="0" y2="1"><stop offset="0" stop-color="#959cab"/><stop offset="0.5" stop-color="#b4bbca"/><stop offset="1" stop-color="#cdd4e2"/></linearGradient><linearGradient id="tbh" x1="0" y1="0" x2="1" y2="0"><stop offset="0" stop-color="#fff" stop-opacity="0.22"/><stop offset="0.3" stop-color="#fff" stop-opacity="0.05"/><stop offset="0.55" stop-color="#fff" stop-opacity="0"/><stop offset="0.8" stop-color="#fff" stop-opacity="0.04"/><stop offset="1" stop-color="#fff" stop-opacity="0.22"/></linearGradient><linearGradient id="win" gradientUnits="userSpaceOnUse" x1="639" y1="1045" x2="662" y2="1068"><stop offset="0" stop-color="#35b4e6"/><stop offset="1" stop-color="#0667c6"/></linearGradient><linearGradient id="pill" x1="0" y1="0" x2="0" y2="1"><stop offset="0" stop-color="#c3c6cc"/><stop offset="1" stop-color="#e6e8ec"/></linearGradient><linearGradient id="cop" x1="0" y1="0" x2="1" y2="1"><stop offset="0" stop-color="#1aa0e8"/><stop offset="0.35" stop-color="#3cc060"/><stop offset="0.6" stop-color="#f0a030"/><stop offset="1" stop-color="#b040d0"/></linearGradient><linearGradient id="pho" x1="0" y1="0" x2="1" y2="1"><stop offset="0" stop-color="#2f7ad8"/><stop offset="1" stop-color="#7a4fc8"/></linearGradient></defs>
<rect x="0" y="1031" width="1920" height="49" fill="url(#tbg)"/><rect x="0" y="1031" width="1920" height="49" fill="url(#tbh)"/>
<rect x="0" y="1031" width="1920" height="2" fill="#7b8089"/>
<path d="M0 1025 v6 h6 a6 6 0 0 1 -6 -6 z" fill="#b4bbc6"/><path d="M1920 1025 v6 h-6 a6 6 0 0 0 6 -6 z" fill="#c3c9d2"/>
<circle cx="32" cy="1056" r="10" fill="#8e949c"/><path d="M28 1062 a4 4 0 0 1 2 -7 a5 5 0 0 1 9 1 a3 3 0 0 1 1 6 z" fill="#e9ecef"/>
<g fill="url(#win)"><rect x="639" y="1045" width="11" height="11" rx="1"/><rect x="651.5" y="1045" width="11" height="11" rx="1"/><rect x="639" y="1057" width="11" height="11" rx="1"/><rect x="651.5" y="1057" width="11" height="11" rx="1"/></g>
<rect x="675.5" y="1040.5" width="218" height="30.5" rx="15.25" fill="url(#pill)" stroke="#a8aeb8" stroke-width="1"/>
<circle cx="693" cy="1054.5" r="5.5" fill="none" stroke="#1a1a1a" stroke-width="1.6"/><path d="M697 1058.5 l4 4" stroke="#1a1a1a" stroke-width="1.8"/>
<rect x="913" y="1045" width="18" height="15" rx="1.5" fill="#d6d6d6"/><rect x="907" y="1051" width="18" height="16" rx="1.5" fill="#1d1d1d"/><rect x="913" y="1051" width="12" height="9" fill="#9a9a9a"/>
<path d="M958 1046 q-7 1 -7 10 q0 8 5 10 h6 q3 -1 4 -4 l3 -9 q1 -7 -5 -7 z" fill="url(#cop)"/><path d="M968 1045 q7 1 7 10 q0 8 -5 11 h-6 l2 -4 l3 -9 z" fill="#c04ad0" opacity="0.85"/>
<circle cx="1007" cy="1055.5" r="12" fill="#e8b820"/><path d="M1007 1055.5 L996.6 1049.5 A12 12 0 0 1 1017.4 1049.5 z" fill="#d53a2a"/><path d="M1007 1055.5 L996.6 1049.5 A12 12 0 0 0 1007 1067.5 z" fill="#2a9a48"/><circle cx="1007" cy="1055.5" r="5.5" fill="#fff"/><circle cx="1007" cy="1055.5" r="4.3" fill="#3a7ee0"/>
<circle cx="1016" cy="1047" r="7.5" fill="#7a5e50"/><text x="1016" y="1050.5" font-size="9" text-anchor="middle" fill="#eee" font-family="Liberation Sans">S</text>
<path d="M1039 1045 h9 l2 2.5 h13 v18.5 h-24 z" fill="#f2c24a"/><rect x="1039" y="1048" width="24" height="2" fill="#d9a21c"/><rect x="1044" y="1060" width="14" height="6" rx="1.5" fill="#1a78c8"/>
<rect x="1083" y="1044" width="24" height="24" rx="3" fill="#e6e8ea"/><path d="M1095 1046 l8 4.5 v9.5 l-8 4.5 v2.5 l-2 -2 l-6 -5 v-9.5 z" fill="#0f2b46"/><path d="M1092 1051 l5 3.5 l-5 3.5" fill="none" stroke="#fff" stroke-width="1.3"/>
<circle cx="1139" cy="1050" r="6" fill="#4a9a3c"/><circle cx="1132" cy="1061" r="6" fill="#d8c030"/><circle cx="1146" cy="1061" r="6" fill="#2e8ad0"/><circle cx="1139" cy="1057" r="5.5" fill="#fff"/><text x="1139" y="1061" font-size="9" text-anchor="middle" fill="#e0a020" font-family="Liberation Sans" font-weight="bold">5</text>
<rect x="1174" y="1046" width="18" height="19" rx="3.5" fill="#1e2a3a" stroke="#c8a040" stroke-width="0.8"/><circle cx="1183" cy="1051" r="2.3" fill="#40b0e0"/><circle cx="1179.5" cy="1058" r="2.3" fill="#d8d030"/><circle cx="1186.5" cy="1058" r="2.3" fill="#e04848"/>
<rect x="1216" y="1045" width="22" height="22" rx="3" fill="url(#pho)"/><path d="M1216 1064 l9 -10 l13 13 h-19 a3 3 0 0 1 -3 -3 z" fill="#30b0e8"/><circle cx="1232" cy="1049.5" r="1.8" fill="#eee"/>
<rect x="1252" y="1037" width="38" height="38" rx="4" fill="#dde2ea" opacity="0.9"/>
<path d="M1268 1048 h12 v12 h-12 z" fill="#e8b800"/><path d="M1262 1047 l13 -3 v17 l-13 3 z" fill="#c08a10"/><path d="M1266 1064 l6 4 v-6 z" fill="#9a6a08"/><text x="1268.5" y="1058" font-size="11" text-anchor="middle" fill="#fff" font-family="Liberation Sans" font-weight="bold">5</text>
<rect x="1263" y="1072" width="16" height="3" rx="1.5" fill="#0a67c2"/>
<rect x="1004" y="1072.5" width="6" height="2.5" rx="1.25" fill="#5e646c"/>
<rect x="1048" y="1072.5" width="6" height="2.5" rx="1.25" fill="#5e646c"/>
<rect x="1136" y="1072.5" width="6" height="2.5" rx="1.25" fill="#5e646c"/>
<rect x="1224" y="1072.5" width="6" height="2.5" rx="1.25" fill="#5e646c"/>
<path d="M1617.5 1058.5 l5 -5 l5 5" fill="none" stroke="#1a1a1a" stroke-width="1.3"/>
<path d="M1649 1060 a3.5 3.5 0 0 1 -0.5 -7 a5 5 0 0 1 9.5 0 a3.5 3.5 0 0 1 0 7 z" fill="#6f7378"/><circle cx="1658.5" cy="1059.5" r="4" fill="#1a6ed0"/><rect x="1658" y="1058" width="1.1" height="3.5" fill="#fff"/>
<path d="M1680.5 1063 l6 -15 l6 15 M1683 1057 h7" fill="none" stroke="#1a1a1a" stroke-width="1.2"/>
<circle cx="1725" cy="1056" r="7.8" fill="none" stroke="#1a1a1a" stroke-width="1.3"/><path d="M1726 1049 a6 6 0 0 1 -6 11" fill="none" stroke="#1a1a1a" stroke-width="1.3"/>
<path d="M1754 1053 q8 -7 16 0 M1756.5 1056 q5.5 -4.5 11 0 M1759 1059 q3 -2.5 6 0" fill="none" stroke="#1a1a1a" stroke-width="1.3"/><circle cx="1762" cy="1062" r="1.2" fill="#1a1a1a"/>
<path d="M1778.5 1053.5 h3 l4 -4 v13 l-4 -4 h-3 z" fill="none" stroke="#1a1a1a" stroke-width="1.2"/><path d="M1788 1053 q2 3 0 6 M1790.5 1051 q3.5 5 0 10" fill="none" stroke="#1a1a1a" stroke-width="1.1"/>
<rect x="1803.5" y="1051.5" width="17" height="9" rx="1.5" fill="#3cb043" stroke="#1a1a1a" stroke-width="1.2"/><rect x="1821" y="1054" width="1.8" height="4" fill="#1a1a1a"/><path d="M1812 1048 l-2.5 4 h3 l-2 4" fill="none" stroke="#1a1a1a" stroke-width="1.1"/>
<text x="1901" y="1052" font-size="12" text-anchor="end" fill="#111" font-family="Liberation Sans">22:33</text>
<text x="1901" y="1068" font-size="12" text-anchor="end" fill="#111" font-family="Liberation Sans">2026/03/28</text>
<text x="712" y="1060" font-size="13" fill="#555" font-family="Liberation Sans">検索</text>
</svg>
</body></html>
